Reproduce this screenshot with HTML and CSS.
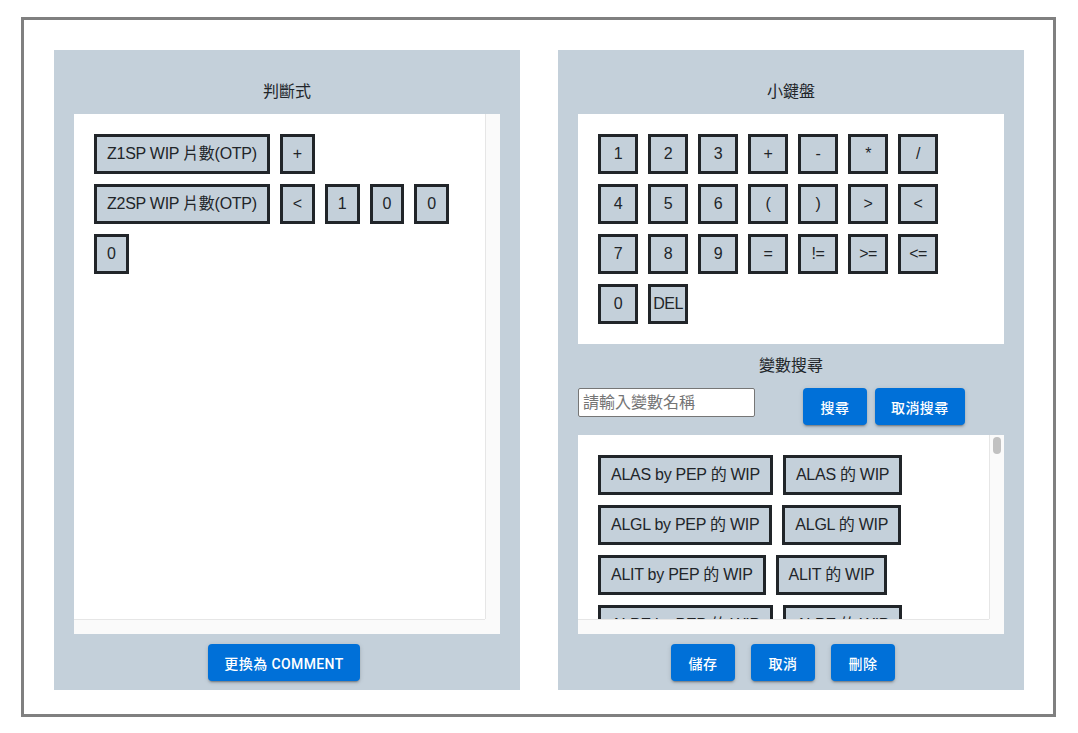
FILE: index.html
```html
<!DOCTYPE html>
<html lang="zh-Hant">
<head>
<meta charset="utf-8">
<title>判斷式編輯</title>
<link rel="stylesheet" href="styles.css">
</head>
<body>
<div class="frame">
  <section class="panel">
    <h2 class="panel-title">判斷式</h2>
    <div class="box scrollbox expr-box">
      <div class="viewport">
        <div class="chips">
          <span class="chip">Z1SP WIP 片數(OTP)</span>
          <span class="chip">+</span>
          <span class="chip">Z2SP WIP 片數(OTP)</span>
          <span class="chip">&lt;</span>
          <span class="chip">1</span>
          <span class="chip">0</span>
          <span class="chip">0</span>
          <span class="chip">0</span>
        </div>
      </div>
      <div class="vtrack"></div>
      <div class="htrack"></div>
      <div class="corner"></div>
    </div>
    <div class="footer footer-left">
      <button class="btn">更換為 COMMENT</button>
    </div>
  </section>

  <section class="panel">
    <h2 class="panel-title">小鍵盤</h2>
    <div class="box keypad-box">
      <div class="keypad">
        <span class="chip key">1</span><span class="chip key">2</span><span class="chip key">3</span><span class="chip key">+</span><span class="chip key">-</span><span class="chip key">*</span><span class="chip key">/</span>
        <span class="chip key">4</span><span class="chip key">5</span><span class="chip key">6</span><span class="chip key">(</span><span class="chip key">)</span><span class="chip key">&gt;</span><span class="chip key">&lt;</span>
        <span class="chip key">7</span><span class="chip key">8</span><span class="chip key">9</span><span class="chip key">=</span><span class="chip key">!=</span><span class="chip key">&gt;=</span><span class="chip key">&lt;=</span>
        <span class="chip key">0</span><span class="chip key">DEL</span>
      </div>
    </div>
    <h2 class="panel-title search-title">變數搜尋</h2>
    <div class="search-row">
      <input class="search-input" type="text" placeholder="請輸入變數名稱">
      <div class="search-btns">
        <button class="btn">搜尋</button>
        <button class="btn">取消搜尋</button>
      </div>
    </div>
    <div class="box scrollbox list-box">
      <div class="viewport">
        <div class="chips">
          <span class="chip">ALAS by PEP 的 WIP</span><span class="chip">ALAS 的 WIP</span>
          <span class="chip">ALGL by PEP 的 WIP</span><span class="chip">ALGL 的 WIP</span>
          <span class="chip">ALIT by PEP 的 WIP</span><span class="chip">ALIT 的 WIP</span>
          <span class="chip">ALPE by PEP 的 WIP</span><span class="chip">ALPE 的 WIP</span>
        </div>
      </div>
      <div class="vtrack"><div class="thumb"></div></div>
      <div class="htrack"></div>
      <div class="corner"></div>
    </div>
    <div class="footer footer-right">
      <button class="btn">儲存</button>
      <button class="btn">取消</button>
      <button class="btn">刪除</button>
    </div>
  </section>
</div>
</body>
</html>
```
FILE: styles.css
```css
* { box-sizing: border-box; }

html, body {
  margin: 0;
  background: #ffffff;
}

body {
  font-family: "Liberation Sans", "Noto Sans CJK TC", sans-serif;
  color: #212529;
}

.frame {
  margin: 17px 0 0 21px;
  width: 1035px;
  height: 700px;
  border: 3px solid #808080;
  padding: 30px 29px 24px 30px;
  display: flex;
  gap: 38px;
}

.panel {
  width: 466px;
  height: 640px;
  background: #c4d0da;
  padding: 30px 20px 0;
  display: flex;
  flex-direction: column;
}

.panel-title {
  margin: 0 0 10px;
  font-size: 16px;
  font-weight: 400;
  line-height: 24px;
  text-align: center;
  color: #212529;
  font-family: "Liberation Sans", "Noto Sans CJK TC", sans-serif;
}

.search-title {
  margin: 10px 0 10px;
}

.box {
  background: #ffffff;
  width: 426px;
  flex-shrink: 0;
}

.scrollbox {
  display: grid;
  grid-template-columns: 1fr 15px;
  grid-template-rows: 1fr 15px;
}

.viewport {
  overflow: hidden;
  min-height: 0;
}

.vtrack {
  background: #fafafa;
  border-left: 1px solid #e6e6e6;
  padding: 2px 3px 0 3px;
}

.thumb {
  height: 17px;
  border-radius: 4px;
  background: #c1c1c1;
}

.htrack {
  background: #fafafa;
  border-top: 1px solid #e6e6e6;
}

.corner {
  background: #fafafa;
}

.expr-box {
  height: 520px;
}

.keypad-box {
  height: 230px;
  padding: 20px;
}

.list-box {
  height: 199px;
  margin-top: 10px;
}

.chips {
  display: flex;
  flex-wrap: wrap;
  gap: 10px;
  padding: 20px;
  align-content: flex-start;
}

.chip {
  display: inline-flex;
  align-items: center;
  justify-content: center;
  height: 40px;
  padding: 0 10px;
  border: 3px solid #212529;
  background: #c4d0da;
  font-size: 16px;
  line-height: 24px;
  letter-spacing: -0.27px;
  white-space: nowrap;
  color: #212529;
}

.keypad {
  display: grid;
  grid-template-columns: repeat(7, 40px);
  grid-auto-rows: 40px;
  gap: 10px;
}

.key {
  width: 40px;
  padding: 0;
  letter-spacing: -0.5px;
}

.search-row {
  display: flex;
  align-items: flex-start;
  height: 37px;
}

.search-input {
  width: 177px;
  height: 29px;
  border: 1px solid #767676;
  border-radius: 2px;
  padding: 1px 4px;
  font-size: 16px;
  font-family: "Liberation Sans", "Noto Sans CJK TC", sans-serif;
  color: #212529;
  background: #ffffff;
}

.search-input::placeholder {
  color: #757575;
}

.search-btns {
  display: flex;
  gap: 8px;
  margin-left: 48px;
}

.btn {
  height: 37px;
  min-width: 64px;
  padding: 0 16px;
  border: 0;
  border-radius: 4px;
  background: #0070d8;
  color: #ffffff;
  font-family: Roboto, "Noto Sans CJK TC", sans-serif;
  font-size: 14px;
  font-weight: 500;
  letter-spacing: 0.4px;
  text-transform: uppercase;
  box-shadow: 0 3px 1px -2px rgba(0,0,0,0.2), 0 2px 2px 0 rgba(0,0,0,0.14), 0 1px 5px 0 rgba(0,0,0,0.12);
  cursor: pointer;
}

.footer {
  display: flex;
  justify-content: center;
  margin-top: 10px;
}

.footer-left {
  padding-right: 6px;
}

.footer-right {
  gap: 16px;
  padding-right: 16px;
}
```
